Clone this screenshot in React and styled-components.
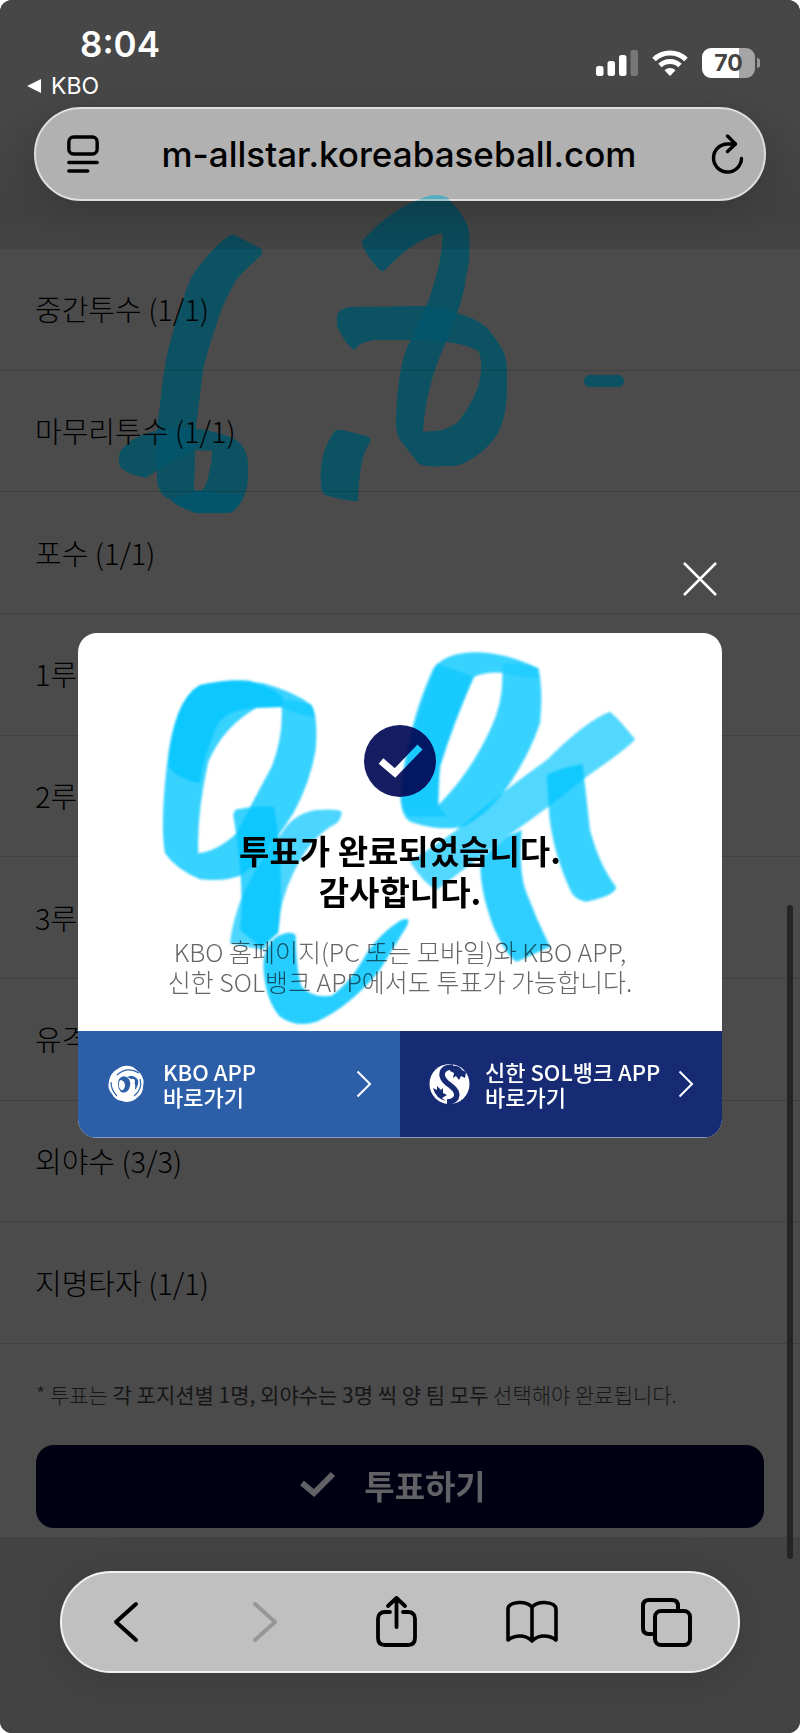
import React from 'react';
import styled, { createGlobalStyle } from 'styled-components';

const GlobalStyle = createGlobalStyle`
  * {
    box-sizing: border-box;
  }

  body {
    margin: 0;
    background: #fff;
    font-family: 'Noto Sans CJK KR', sans-serif;
  }

  button {
    padding: 0;
    border: 0;
    background: none;
    color: inherit;
    font: inherit;
  }
`;

const Screen = styled.div`
  position: relative;
  isolation: isolate;
  display: flex;
  flex-direction: column;
  min-height: 100vh;
  overflow: hidden;
  border-radius: 12px;
  background: #434343;
`;

const Header = styled.header`
  padding: 0 34px 48px;
  background: linear-gradient(#474747 40%, #414141 85%, #444 100%);
`;

const StatusBar = styled.div`
  display: flex;
  justify-content: space-between;
  height: 107px;
  padding: 22px 6px 0 0;
  color: #fff;
  font-family: Inter, sans-serif;
`;

const Clock = styled.div`
  padding-left: 46px;
  font-size: 35px;
  font-weight: 600;
  line-height: 44px;
`;

const BackToApp = styled.button`
  display: flex;
  align-items: center;
  gap: 9px;
  margin-left: -8px;
  font-size: 23px;
  line-height: 40px;
`;

const StatusIcons = styled.div`
  display: flex;
  align-items: center;
  gap: 14px;
  height: 30px;
  margin-top: 26px;
`;

const Battery = styled.div`
  display: flex;
  align-items: center;
  gap: 2px;
`;

const BatteryBody = styled.div`
  width: 53px;
  height: 30px;
  border-radius: 9px;
  background: linear-gradient(90deg, #fff 70%, #a5a5a5 70%);
  color: #444;
  font-size: 23px;
  font-weight: 700;
  line-height: 30px;
  text-align: center;
`;

const BatteryNub = styled.div`
  width: 3px;
  height: 10px;
  border-radius: 0 3px 3px 0;
  background: #999;
`;

const UrlBar = styled.div`
  display: flex;
  align-items: center;
  justify-content: space-between;
  height: 94px;
  padding: 0 18px 0 30px;
  border: 2px solid #dedede;
  border-radius: 47px;
  background: #b1b1b1;
  box-shadow: 0 6px 36px rgba(0, 0, 0, 0.16);
  color: #000;
`;

const Url = styled.span`
  font-family: Inter, sans-serif;
  font-size: 35px;
  font-weight: 500;
`;

const IconButton = styled.button`
  display: flex;
  align-items: center;
  justify-content: center;
  color: ${({ $muted }) => ($muted ? '#979797' : '#000')};
`;

const ReloadButton = styled(IconButton)`
  padding-left: 12px;
`;

const Positions = styled.ul`
  flex: 1;
  display: flex;
  flex-direction: column;
  margin: 0;
  padding: 0;
  list-style: none;
  background: #4b4b4b;
`;

const Position = styled.li`
  flex: 1;
  display: flex;
  align-items: center;
  min-height: 80px;
  padding: 0 35px 2px;
  border-bottom: 1px solid #404040;
  color: #000;
  font-size: 29px;
  font-weight: 300;
  line-height: 40px;
`;

const VoteArea = styled.section`
  padding: 35px 36px 9px;
  background: #4b4b4b;
`;

const Note = styled.p`
  margin: 0 0 36px;
  color: #161616;
  font-size: 21px;
  font-weight: 300;
  line-height: 30px;
  white-space: nowrap;
`;

const VoteButton = styled.button`
  display: flex;
  align-items: center;
  justify-content: center;
  gap: 28px;
  width: 100%;
  height: 83px;
  padding: 0 14px 4px 0;
  border-radius: 18px;
  background: #000013;
  color: #626266;
  font-size: 33px;
  font-weight: 700;
`;

const BottomArea = styled.footer`
  padding: 34px 60px 60px;
  background: #434343;
`;

const Toolbar = styled.nav`
  display: flex;
  align-items: center;
  justify-content: space-between;
  height: 102px;
  padding: 0 45px 0 38px;
  border: 2px solid #f2f2f2;
  border-radius: 51px;
  background: #c0c0c0;
  box-shadow: 0 6px 40px rgba(0, 0, 0, 0.12);
`;

const Scrollbar = styled.div`
  position: absolute;
  top: 905px;
  right: 7px;
  width: 6px;
  height: 654px;
  border-radius: 3px;
  background: #242424;
`;

const Overlay = styled.div`
  position: absolute;
  inset: 0;
  display: flex;
  flex-direction: column;
  justify-content: center;
  padding: 0 78px 34px;
`;

const CloseButton = styled.button`
  align-self: flex-end;
  display: flex;
  margin: 0 5px 37px;
`;

const Dialog = styled.div`
  overflow: hidden;
  border-radius: 19px;
  background: #fff;
`;

const DialogBody = styled.div`
  display: flex;
  flex-direction: column;
  align-items: center;
  padding: 92px 20px 35px;
  text-align: center;
`;

const Title = styled.h1`
  margin: 33px 0 24px;
  color: #000;
  font-size: 33px;
  font-weight: 700;
  line-height: 41px;
`;

const Description = styled.p`
  margin: 0;
  color: #666;
  font-size: 25px;
  font-weight: 300;
  line-height: 30px;
`;

const AppLinks = styled.div`
  display: flex;
`;

const AppLink = styled.a`
  flex: 1;
  display: flex;
  align-items: center;
  height: 107px;
  padding: 0 28px;
  border-bottom: 1px solid #8d9cc4;
  background: ${({ $color }) => $color};
  color: #fff;
  font-size: 22px;
  font-weight: 500;
  line-height: 25px;
  text-decoration: none;
`;

const AppName = styled.span`
  flex: 1;
  padding-left: 14px;
  white-space: nowrap;
`;

const Ink = styled.svg`
  position: absolute;
  top: 0;
  left: 0;
  width: 100%;
  pointer-events: none;
  mix-blend-mode: ${({ $blend }) => $blend};
`;

const positions = [
  '중간투수 (1/1)',
  '마무리투수 (1/1)',
  '포수 (1/1)',
  '1루수 (1/1)',
  '2루수 (1/1)',
  '3루수 (1/1)',
  '유격수 (1/1)',
  '외야수 (3/3)',
  '지명타자 (1/1)',
];

const SignalIcon = () => (
  <svg width="42" height="28" viewBox="0 0 42 28" fill="#fff">
    <rect x="0" y="17" width="7.500" height="10" rx="2.500" />
    <rect x="11.500" y="12" width="7.500" height="15" rx="2.500" />
    <rect x="23" y="6" width="7.500" height="21" rx="2.500" />
    <rect x="34.500" y="1" width="7.500" height="26" rx="2.500" fill="#777" />
  </svg>
);

const WifiIcon = () => (
  <svg width="36" height="28" viewBox="0 0 36 28" fill="none" stroke="#fff" strokeWidth="5">
    <path d="M2 10.500A23 23 0 0 1 34 10.500" />
    <path d="M8 16.500A14.500 14.500 0 0 1 28 16.500" />
    <path d="M18 27L12.500 21.300A8 8 0 0 1 23.500 21.300Z" fill="#fff" stroke="none" />
  </svg>
);

const PageMenuIcon = () => (
  <svg width="34" height="40" viewBox="0 0 36 42" fill="none" stroke="currentColor" strokeWidth="3.600" strokeLinecap="round">
    <rect x="3" y="3" width="30" height="18" rx="5" />
    <path d="M3 30H33M3 39H23" />
  </svg>
);

const ReloadIcon = () => (
  <svg width="36" height="42" viewBox="0 0 36 42" fill="none" stroke="currentColor" strokeWidth="3.400" strokeLinecap="round" strokeLinejoin="round">
    <path d="M31.500 25.500A14 14 0 1 1 17.500 11H25" />
    <path d="M17.500 3L25.500 11L17.500 18.500" />
  </svg>
);

const BackIcon = () => (
  <svg width="52" height="52" viewBox="0 0 52 52" fill="none" stroke="currentColor" strokeWidth="4" strokeLinecap="round" strokeLinejoin="round">
    <path d="M36 8L16 26L36 44" />
  </svg>
);

const ForwardIcon = () => (
  <svg width="52" height="52" viewBox="0 0 52 52" fill="none" stroke="currentColor" strokeWidth="4" strokeLinecap="round" strokeLinejoin="round">
    <path d="M20 8L40 26L20 44" />
  </svg>
);

const ShareIcon = () => (
  <svg width="52" height="52" viewBox="0 0 52 52" fill="none" stroke="currentColor" strokeWidth="3.800" strokeLinecap="round" strokeLinejoin="round">
    <path d="M19 16H14Q7 16 7 23V42Q7 49 14 49H37Q44 49 44 42V23Q44 16 37 16H32" />
    <path d="M25.500 31V2M17 10L25.500 2L34 10" />
  </svg>
);

const BookIcon = () => (
  <svg width="52" height="52" viewBox="0 0 52 52" fill="none" stroke="currentColor" strokeWidth="3.600" strokeLinecap="round" strokeLinejoin="round">
    <path d="M26 11Q21 6 13 6.500Q2 7.500 2 13V44Q7 40 14 40Q21 40 26 45Q31 40 38 40Q45 40 50 44V13Q50 7.500 39 6.500Q31 6 26 11V45" />
  </svg>
);

const TabsIcon = () => (
  <svg width="52" height="52" viewBox="0 0 52 52" fill="none" stroke="currentColor" strokeWidth="4" strokeLinecap="round">
    <path d="M11 38H8Q2 38 2 32V10Q2 4 8 4H31Q37 4 37 10V14" />
    <rect x="14" y="15" width="35" height="34" rx="6" />
  </svg>
);

const CheckBadge = () => (
  <svg width="72" height="72" viewBox="0 0 72 72">
    <circle cx="36" cy="36" r="36" fill="#171d62" />
    <path d="M17 36L31 48L56 22" fill="none" stroke="#fff" strokeWidth="7" />
  </svg>
);

const ArrowIcon = () => (
  <svg width="16" height="28" viewBox="0 0 16 28" fill="none" stroke="#fff" strokeWidth="2">
    <path d="M1.500 1.500L14 14L1.500 26.500" />
  </svg>
);

const KboLogo = () => (
  <svg width="43" height="40" viewBox="-1 -1 43 40" fill="none">
    <path d="M12 3Q18 -1 26 2L33 8Q38 14 36 22Q36 28 31 32Q24 39 15 36Q8 35 5 29Q0 24 2 16Q3 8 12 3Z" fill="#fff" />
    <path d="M10 10Q20 1 32 8M4 17Q4 25 10 31M33 14Q36 24 27 31" stroke="#2c5fa8" strokeWidth="1.200" />
    <path d="M12 14Q16 9 21 13Q25 17 22 24Q19 29 14 27Q9 22 12 14Z" fill="#2c5fa8" />
    <path d="M13 15Q18 15 18 21Q17 26 14 25Q10 21 13 15Z" fill="#fff" />
    <path d="M20 12Q27 9 31 15Q32 20 28 25Q29 17 25 15Q23 13 20 12Z" fill="#2c5fa8" />
    <path d="M24 14Q28 13 28 17Q27 19 25 17Z" fill="#fff" />
  </svg>
);

const ShinhanLogo = () => (
  <svg width="43" height="42" viewBox="-1 -1 43 42" fill="none">
    <circle cx="20.500" cy="20" r="20" fill="#fff" />
    <path d="M24 3Q13 3 13 11Q14 17 22 22Q30 28 27 34Q24 38 18 38" stroke="#162b74" strokeWidth="5.500" />
    <path d="M22 2Q30 1 33 6L37 8L36 14L32 12L30 16L27 12L24 14L25 9L21 7Z" fill="#162b74" />
    <path d="M4 24L8 26L8 22L12 26L14 24L14 29L18 31L13 34L17 37Q7 35 4 24Z" fill="#162b74" />
  </svg>
);

// marker strokes across the dimmed list
const ListInk = ({ blend, color, opacity }) => (
  <Ink $blend={blend} viewBox="0 0 800 1733" fill={color} fillOpacity={opacity}>
    <path d="M229 236Q235 233 240 238L262 249Q263 255 258 258Q240 275 236 280Q222 305 218 320Q206 355 203 370L196 427L194 490L203 491Q230 495 244 495Q240 508 230 513L196 513Q175 505 171 500Q158 495 157 480L157 430Q161 395 162 387Q167 350 171 340Q178 310 184 297Q190 275 202 263Q215 245 229 236Z" />
    <path d="M161 430Q190 425 214 432Q232 436 240 443Q248 452 248 465Q249 488 243 498Q236 512 228 513L196 513Q180 508 171 500L194 491L202 491Q208 482 209 473Q212 462 212 451L194 450L170 462L146 478Q128 475 120 467Q117 458 121 450Q135 434 161 430Z" />
    <path d="M362 241Q390 210 418 200Q436 191 448 198Q466 218 469 230Q471 260 466 277Q464 295 457 313L446 342Q438 360 434 373Q425 400 423 432L443 430V466Q425 468 418 463L400 440Q395 430 396 420Q398 360 411 340L426 307Q444 260 442 233Q415 238 384 271Q380 272 376 266Q362 250 362 241Z" />
    <path d="M337 316Q338 309 350 307L425 306Q445 307 457 313Q475 318 486 327Q498 340 504 353Q508 365 507 380Q508 410 500 429Q490 450 464 463Q455 467 443 466V430Q458 424 461 418Q482 390 481 367Q481 350 476 350Q465 344 446 342L411 340L374 340Q360 342 354 350Q345 344 337 326Z" />
    <path d="M334 432Q336 429 342 430L367 436Q372 438 370 442Q366 449 364 454Q359 470 358 501Q350 502 325 495Q321 492 321 486Q318 455 334 432Z" />
    <rect x="584" y="375" width="40" height="12" rx="6" />
  </Ink>
);

// marker strokes across the dialog
const DialogInk = () => (
  <Ink $blend="multiply" viewBox="0 0 800 1733" fill="#00c5ff" fillOpacity="0.78">
    <filter id="soft">
      <feGaussianBlur stdDeviation="1" />
    </filter>
    <g filter="url(#soft)">
      <g transform="translate(150 640) scale(0.3333)" fillRule="evenodd">
        <path d="M150 135Q240 115 340 130Q430 155 485 195Q505 230 497 330Q480 430 430 520Q340 660 275 705Q230 725 150 718Q80 690 45 640Q30 560 50 380Q70 180 150 135ZM320 203Q220 260 175 365Q140 520 145 640Q200 635 260 580Q300 500 365 380Q400 290 395 202Z" />
        <path d="M150 135Q240 115 300 122Q370 145 400 172L395 200L300 205Q220 215 200 260Q160 350 150 430Q80 415 55 380Q70 180 150 135Z" />
        <path d="M395 202L390 180Q440 180 485 195Q492 210 495 232Q440 225 395 202Z" fillOpacity="0.5" />
        <path d="M262 508Q320 495 372 500Q388 580 392 690Q395 800 385 880L330 920L270 870Q285 740 250 525Q252 510 262 508Z" />
        <path d="M575 515Q560 505 500 510Q430 520 395 580Q300 700 265 800Q245 860 240 910L340 930L385 870Q390 780 430 700Q480 590 560 550Q575 535 575 515Z" fillOpacity="0.7" />
        <path d="M380 890Q420 870 437 885Q440 1000 455 1040Q490 1075 545 1067Q600 1030 650 940Q690 880 750 842Q790 825 767 865Q720 940 690 990Q600 1100 500 1145Q440 1165 390 1130Q345 1080 340 980Q340 920 380 890Z" fillOpacity="0.85" />
      </g>
      <g transform="translate(390 640) scale(0.3333)" fillRule="evenodd">
        <path d="M130 85Q160 45 230 38Q330 30 445 85Q460 150 450 250Q420 340 360 430Q300 520 220 560Q150 575 60 545Q30 525 32 460Q50 260 130 85ZM252 110Q190 250 150 380Q145 440 145 495Q240 400 300 270Q340 190 337 98Q290 95 252 110Z" />
        <path d="M140 70L252 110Q190 250 150 380Q145 440 145 495L170 530L60 530Q32 520 32 460Q60 260 140 70Z" fillOpacity="0.55" />
        <path d="M337 70Q400 70 445 85L450 115Q400 115 337 98Z" fillOpacity="0.4" />
        <path d="M660 215Q690 240 735 298Q720 320 590 410Q480 500 350 590L140 750Q100 730 60 665Q130 620 200 570Q330 460 470 360Q590 240 660 215Z" fillOpacity="0.68" />
        <path d="M470 405Q520 380 578 373Q590 480 600 570Q630 680 678 740Q680 765 590 785Q565 785 545 760Q490 640 478 530Z" />
        <path d="M350 590L395 570Q385 700 410 760Q440 840 480 920L380 965Q350 950 310 860Q265 740 272 655Z" fillOpacity="0.82" />
      </g>
    </g>
  </Ink>
);

const App = () => {
  return (
    <>
      <GlobalStyle />
      <Screen>
        <Header>
          <StatusBar>
            <div>
              <Clock>8:04</Clock>
              <BackToApp type="button">
                <svg width="16" height="16" viewBox="0 0 16 16" fill="#fff">
                  <path d="M1 8L15 1V15Z" />
                </svg>
                KBO
              </BackToApp>
            </div>
            <StatusIcons>
              <SignalIcon />
              <WifiIcon />
              <Battery>
                <BatteryBody>70</BatteryBody>
                <BatteryNub />
              </Battery>
            </StatusIcons>
          </StatusBar>
          <UrlBar>
            <IconButton type="button" aria-label="페이지 메뉴">
              <PageMenuIcon />
            </IconButton>
            <Url>m-allstar.koreabaseball.com</Url>
            <ReloadButton type="button" aria-label="새로고침">
              <ReloadIcon />
            </ReloadButton>
          </UrlBar>
        </Header>

        <Positions>
          {positions.map((name) => (
            <Position key={name}>{name}</Position>
          ))}
        </Positions>

        <VoteArea>
          <Note>
            * 투표는 <b>각 포지션별 1명, 외야수는 3명 씩 양 팀 모두</b> 선택해야 완료됩니다.
          </Note>
          <VoteButton type="button">
            <svg width="36" height="28" viewBox="0 0 36 28" fill="none" stroke="currentColor" strokeWidth="6">
              <path d="M2 12L14 22L33 3" />
            </svg>
            투표하기
          </VoteButton>
        </VoteArea>

        <BottomArea>
          <Toolbar>
            <IconButton type="button" aria-label="뒤로">
              <BackIcon />
            </IconButton>
            <IconButton type="button" aria-label="앞으로" $muted>
              <ForwardIcon />
            </IconButton>
            <IconButton type="button" aria-label="공유">
              <ShareIcon />
            </IconButton>
            <IconButton type="button" aria-label="책갈피">
              <BookIcon />
            </IconButton>
            <IconButton type="button" aria-label="탭">
              <TabsIcon />
            </IconButton>
          </Toolbar>
        </BottomArea>

        <Scrollbar />

        <Overlay>
          <CloseButton type="button" aria-label="닫기">
            <svg width="34" height="34" viewBox="0 0 34 34" fill="none" stroke="#fff" strokeWidth="2.500">
              <path d="M1 1L33 33M33 1L1 33" />
            </svg>
          </CloseButton>
          <Dialog role="dialog" aria-labelledby="vote-done">
            <DialogBody>
              <CheckBadge />
              <Title id="vote-done">
                투표가 완료되었습니다.
                <br />
                감사합니다.
              </Title>
              <Description>
                KBO 홈페이지(PC 또는 모바일)와 KBO APP,
                <br />
                신한 SOL뱅크 APP에서도 투표가 가능합니다.
              </Description>
            </DialogBody>
            <AppLinks>
              <AppLink href="#kbo" $color="#2c5fa8">
                <KboLogo />
                <AppName>
                  KBO APP
                  <br />
                  바로가기
                </AppName>
                <ArrowIcon />
              </AppLink>
              <AppLink href="#sol" $color="#162b74">
                <ShinhanLogo />
                <AppName>
                  신한 SOL뱅크 APP
                  <br />
                  바로가기
                </AppName>
                <ArrowIcon />
              </AppLink>
            </AppLinks>
          </Dialog>
        </Overlay>

        {/* tint first, then darken a little */}
        <ListInk blend="color" color="#00c3ff" opacity="0.8" />
        <ListInk blend="multiply" color="#d8d6cf" opacity="1" />
        <DialogInk />
      </Screen>
    </>
  );
};

export default App;
